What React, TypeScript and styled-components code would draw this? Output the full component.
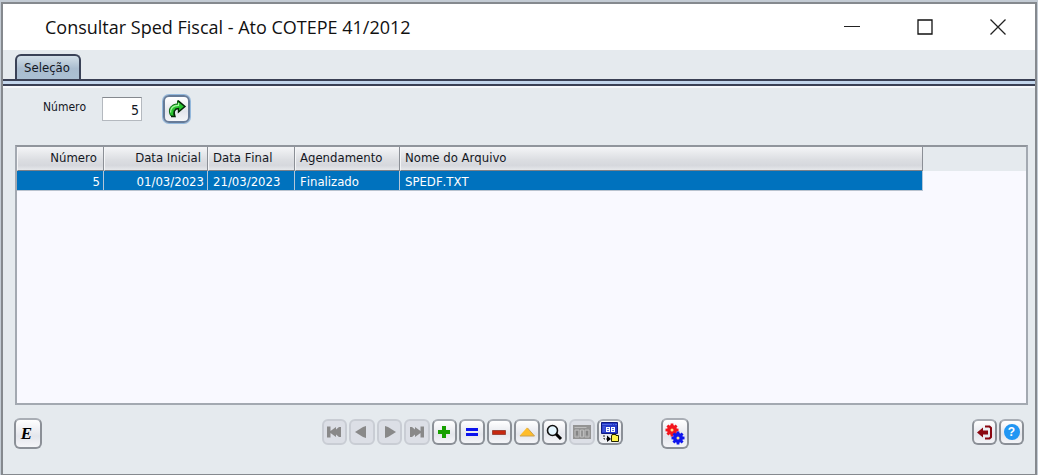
import React, { useState } from "react";
import styled, { createGlobalStyle, css } from "styled-components";

const GlobalStyle = createGlobalStyle`
  *, *::before, *::after { box-sizing: border-box; }
  html, body, #root { height: 100%; }
  body {
    margin: 0;
    background: #c3cbd4;
    color: #14171f;
    font-family: "DejaVu Sans Condensed", "Noto Sans", sans-serif;
    font-size: 13px;
    font-kerning: none;
  }
  button, input { font: inherit; color: inherit; }
`;

const Desktop = styled.div`
  display: flex;
  min-height: 100%;
  padding: 2px 1px 0;
`;

const Window = styled.main`
  flex: 1;
  display: flex;
  flex-direction: column;
  background: #e5eaee;
  border: 2px solid #85898e;
  border-bottom-width: 1px;
`;

const TitleBar = styled.header`
  display: flex;
  align-items: center;
  height: 46px;
  padding: 0 1px 0 42px;
  background: #fff;
`;

const Title = styled.h1`
  flex: 1;
  margin: 0;
  font: 400 18px/46px "Open Sans", "Noto Sans", sans-serif;
  font-kerning: auto;
  color: #111;
`;

const CaptionButton = styled.button`
  display: grid;
  place-items: center;
  width: 73px;
  height: 46px;
  padding: 0;
  border: 0;
  background: transparent;
`;

const TabStrip = styled.div`
  display: flex;
  align-items: flex-end;
  height: 29px;
  padding: 4px 12px 0;
`;

const Tab = styled.button`
  width: 66px;
  height: 25px;
  padding: 0 2px 1px 0;
  border: 2px solid #3a4257;
  border-bottom: 0;
  border-radius: 6px 6px 0 0;
  background: linear-gradient(#d3dfe8, #a9bccf 55%, #abc0d3);
  font-size: 13px;
`;

const TabRule = styled.div`
  height: 9px;
  border-top: 2px solid #3a4054;
  border-bottom: 2px solid #f6f8fa;
  background: linear-gradient(#c3d6ec 3px, #3a4054 3px);
`;

const Content = styled.section`
  flex: 1;
  display: flex;
  flex-direction: column;
  padding: 7px 7px 0 12px;
`;

const SearchForm = styled.form`
  display: flex;
  align-items: flex-start;
  height: 50px;
  padding-left: 28px;
`;

const FieldLabel = styled.label`
  width: 59px;
  padding-top: 4px;
  font-size: 12px;
  line-height: 16px;
`;

const NumberInput = styled.input`
  width: 40px;
  height: 24px;
  margin: 2px 21px 0 0;
  padding: 2px 2px 0;
  border: 1px solid #b4b9bf;
  border-top-color: #85898f;
  border-radius: 0;
  background: #fff;
  font-size: 14px;
  text-align: right;
`;

const PushButton = styled.button<{ $size?: "small" | "large"; $focused?: boolean }>`
  display: grid;
  place-items: center;
  flex: none;
  width: ${({ $size }) => ($size === "large" ? 28 : 25)}px;
  height: ${({ $size }) => ($size === "large" ? 31 : 26)}px;
  padding: 0;
  border: 2px solid #8b9097;
  border-top-color: #a9aeb5;
  border-radius: 6px;
  background: linear-gradient(#fff, #e4e6ec 60%, #f4f5f8);

  ${({ $focused }) =>
    $focused &&
    css`
      width: 27px;
      height: 28px;
      border-color: #667b98;
      box-shadow: 0 0 0 1px #93b8dc;
    `}

  &:disabled {
    border-color: #c9cdd4;
    background: #dcdfe6;
  }
`;

const GridPanel = styled.div`
  flex: 1;
  border: 2px solid #a3a9b1;
  border-top-color: #90959c;
  background: #f9f9ff;
`;

const DataTable = styled.table`
  width: 100%;
  table-layout: fixed;
  border-collapse: separate;
  border-spacing: 0;
`;

const Column = styled.col<{ $width?: number }>`
  width: ${({ $width }) => ($width ? `${$width}px` : "auto")};
`;

const HeaderCell = styled.th<{ $right?: boolean }>`
  height: 24px;
  padding: 0 6px 2px 4px;
  border-right: 1px solid #8b8f96;
  border-bottom: 1px solid #7c8087;
  border-left: 1px solid #f4f5f7;
  background: linear-gradient(#f4f5f7, #dcdee2 55%, #d6d8dd 80%, #e6e8eb);
  font-weight: 400;
  text-align: ${({ $right }) => ($right ? "right" : "left")};
  white-space: nowrap;
`;

const HeaderRest = styled.td`
  padding: 0;
  background: #e5eaee;
`;

const Cell = styled.td<{ $right?: boolean }>`
  height: 20px;
  padding: 1px 3px 0 5px;
  border-right: 1px solid #b4c6d8;
  border-bottom: 1px solid #b9c3cf;
  background: #0072be;
  color: #fff;
  text-align: ${({ $right }) => ($right ? "right" : "left")};
  white-space: nowrap;
`;

const Footer = styled.footer`
  display: flex;
  justify-content: space-between;
  align-items: flex-start;
  height: 69px;
  padding: 13px 11px 0 11px;
`;

const CenterTools = styled.div`
  display: flex;
  align-items: flex-start;
  gap: 38px;
  padding-right: 4px;
`;

const NavigatorBar = styled.div`
  display: grid;
  grid-template-columns: repeat(11, 1fr);
  gap: 2px;
  width: 301px;
  padding-top: 1px;

  ${PushButton} { width: auto; }
`;

const SideTools = styled.div`
  display: flex;
  gap: 2px;
  padding-top: 1px;
`;

const EditLetter = styled.span`
  padding-right: 3px;
  font: italic 700 17px/20px "Liberation Serif", serif;
  color: #000;
`;

const Icon = ({ size = 18, children }: { size?: number; children: React.ReactNode }) => (
  <svg width={size} height={size} viewBox={`0 0 ${size} ${size}`} fill="none" aria-hidden="true">
    {children}
  </svg>
);

const GoIcon = () => (
  <Icon size={20}>
    <path
      d="M3.500 16.500C0.500 10 4 5 10.500 5V1.800L17.500 7.500L11.500 13V9.500C7 9.500 6 12 7.500 17.500Z"
      fill="#27c52e"
      stroke="#0c6412"
      strokeWidth="1"
    />
    <path d="M3.500 13.500C3.500 9 6 6.500 11.500 6.300V4" stroke="#a5f5a0" strokeWidth="1.200" />
    <path d="M4 17.500h4C6 13 7.500 9.800 11.500 9.500V13L18 7.500L11 1.500" stroke="#062508" strokeWidth="1.400" />
  </Icon>
);

const PlusIcon = () => (
  <Icon>
    <path d="M7 3h4v4h4v4h-4v4H7v-4H3V7h4z" fill="#17a000" />
  </Icon>
);

const EqualsIcon = () => (
  <Icon>
    <path d="M3 5h12v3H3zM3 10h12v3H3z" fill="#0b12ee" />
  </Icon>
);

const MinusIcon = () => (
  <Icon>
    <path d="M2.500 7.500h13v4h-13z" fill="#c62710" stroke="#9e463b" />
  </Icon>
);

const TriangleIcon = () => (
  <Icon>
    <path d="M9 4.500L16.500 13h-15z" fill="#ffbd29" />
    <path d="M2 13h14.500L9.500 5" stroke="#c9a053" />
  </Icon>
);

const SearchIcon = () => (
  <Icon>
    <circle cx="7.500" cy="7.500" r="5" fill="#e4f6ff" stroke="#111" strokeWidth="1.600" />
    <path d="M11 11l5 5" stroke="#000" strokeWidth="3" />
  </Icon>
);

const FormIcon = () => (
  <Icon size={20}>
    <path d="M1 3h18v14H1z" fill="#949494" />
    <path d="M2.500 5.500h12M3 8h4v7H3zM8.500 8h3v7h-3zM13 8h4v7h-4z" stroke="#bcbcbc" />
    <path d="M4 10h2M4 12h2M14 10h2M14 12h2" stroke="#777" />
  </Icon>
);

const ExportIcon = () => (
  <Icon size={22}>
    <path d="M2.500 1.500h16v11h-16z" fill="#2438c8" stroke="#101a80" />
    <path d="M3 3.500h15" stroke="#5269dd" strokeDasharray="10 1 1 1" />
    <path d="M7 6h4v5H7zM12 6h4v5h-4z" fill="#fff" />
    <path d="M3.500 6h3M3.500 8h3M3.500 10h3M8 7.500h2M8 9.500h2M13 7.500h2M13 9.500h2" stroke="#5b70e2" />
    <path d="M13 14.500v-1h4v1h2.500v6h-7v-6z" fill="#fff34a" stroke="#222400" />
    <path d="M5 14v4h4" stroke="#222" strokeDasharray="2 1" />
    <path d="M8 14.500l4 3.500-4 3z" fill="#000" />
  </Icon>
);

const NavIcon = ({ kind }: { kind: "first" | "prev" | "next" | "last" }) => {
  const forward = kind === "next" || kind === "last";
  const ends = kind === "first" || kind === "last";
  return (
    <Icon>
      <g transform={forward ? "translate(18 0) scale(-1 1)" : undefined} fill="#898989">
        {ends ? (
          <path d="M2 3.500h3.500v4.500L11 4v2.500L14 4h2v10h-2L11 11.500V14L5.500 10v4.500H2z" />
        ) : (
          <path d="M2 9L10 4l3-1v12l-3-1z" />
        )}
      </g>
    </Icon>
  );
};

const Gear = ({ x, y, color }: { x: number; y: number; color: string }) => (
  <g transform={`translate(${x} ${y})`}>
    {[0, 45, 90, 135].map((angle) => (
      <path key={angle} d="M0-6.500V6.500" stroke={color} strokeWidth="2.800" transform={`rotate(${angle})`} />
    ))}
    <circle r="3.200" fill="#ffe08a" stroke={color} strokeWidth="3.400" />
  </g>
);

const GearsIcon = () => (
  <Icon size={22}>
    <Gear x={8} y={7} color="#f3151c" />
    <Gear x={14} y={15} color="#1016ed" />
  </Icon>
);

const ExitIcon = () => (
  <Icon>
    <path d="M1 9.500l6-5v3h5v4H7v3z" fill="#8a0710" />
    <path d="M9 3.500h4.500L15 5v9l-1.500 1.500H9" stroke="#8a0710" strokeWidth="2" />
  </Icon>
);

const HelpBadge = styled.span`
  display: grid;
  place-items: center;
  width: 16px;
  height: 16px;
  border-radius: 50%;
  background: #2196f3;
  color: #fff;
  font: 700 12px/16px "Liberation Sans", sans-serif;
`;

const navigator = [
  { label: "Primeiro", icon: <NavIcon kind="first" />, disabled: true },
  { label: "Anterior", icon: <NavIcon kind="prev" />, disabled: true },
  { label: "Próximo", icon: <NavIcon kind="next" />, disabled: true },
  { label: "Último", icon: <NavIcon kind="last" />, disabled: true },
  { label: "Incluir", icon: <PlusIcon /> },
  { label: "Alterar", icon: <EqualsIcon /> },
  { label: "Excluir", icon: <MinusIcon /> },
  { label: "Subir", icon: <TriangleIcon /> },
  { label: "Pesquisar", icon: <SearchIcon /> },
  { label: "Formulário", icon: <FormIcon />, disabled: true },
  { label: "Exportar", icon: <ExportIcon /> },
];

const columns = [
  { title: "Número", width: 87, right: true },
  { title: "Data Inicial", width: 104, right: true },
  { title: "Data Final", width: 87 },
  { title: "Agendamento", width: 105 },
  { title: "Nome do Arquivo", width: 523 },
];

const rows = [["5", "01/03/2023", "21/03/2023", "Finalizado", "SPEDF.TXT"]];

export default function App() {
  const [number, setNumber] = useState("5");

  return (
    <>
      <GlobalStyle />
      <Desktop>
        <Window>
          <TitleBar>
            <Title>Consultar Sped Fiscal - Ato COTEPE 41/2012</Title>
            <CaptionButton aria-label="Minimizar">
              <Icon>
                <path d="M1 8.500h16" stroke="#222" />
              </Icon>
            </CaptionButton>
            <CaptionButton aria-label="Maximizar">
              <Icon>
                <path d="M2 2h14v14H2z" stroke="#111" strokeWidth="1.300" />
              </Icon>
            </CaptionButton>
            <CaptionButton aria-label="Fechar">
              <Icon>
                <path d="M1.500 1.500l15 15M16.500 1.500l-15 15" stroke="#222" strokeWidth="1.300" />
              </Icon>
            </CaptionButton>
          </TitleBar>
          <TabStrip role="tablist">
            <Tab role="tab" aria-selected="true">Seleção</Tab>
          </TabStrip>
          <TabRule />
          <Content>
            <SearchForm onSubmit={(event) => event.preventDefault()}>
              <FieldLabel htmlFor="numero">Número</FieldLabel>
              <NumberInput id="numero" value={number} onChange={(event) => setNumber(event.target.value)} />
              <PushButton type="submit" $focused aria-label="Consultar">
                <GoIcon />
              </PushButton>
            </SearchForm>
            <GridPanel>
              <DataTable>
                <colgroup>
                  {columns.map((column) => (
                    <Column key={column.title} $width={column.width} />
                  ))}
                  <Column />
                </colgroup>
                <thead>
                  <tr>
                    {columns.map((column) => (
                      <HeaderCell key={column.title} $right={column.right}>{column.title}</HeaderCell>
                    ))}
                    <HeaderRest />
                  </tr>
                </thead>
                <tbody>
                  {rows.map((row) => (
                    <tr key={row[0]}>
                      {row.map((value, index) => (
                        <Cell key={columns[index].title} $right={columns[index].right}>{value}</Cell>
                      ))}
                    </tr>
                  ))}
                </tbody>
              </DataTable>
            </GridPanel>
          </Content>
          <Footer>
            <PushButton $size="large" aria-label="Editar">
              <EditLetter>E</EditLetter>
            </PushButton>
            <CenterTools>
              <NavigatorBar>
                {navigator.map((item) => (
                  <PushButton key={item.label} aria-label={item.label} disabled={item.disabled}>
                    {item.icon}
                  </PushButton>
                ))}
              </NavigatorBar>
              <PushButton $size="large" aria-label="Processar">
                <GearsIcon />
              </PushButton>
            </CenterTools>
            <SideTools>
              <PushButton aria-label="Sair">
                <ExitIcon />
              </PushButton>
              <PushButton aria-label="Ajuda">
                <HelpBadge>?</HelpBadge>
              </PushButton>
            </SideTools>
          </Footer>
        </Window>
      </Desktop>
    </>
  );
}
